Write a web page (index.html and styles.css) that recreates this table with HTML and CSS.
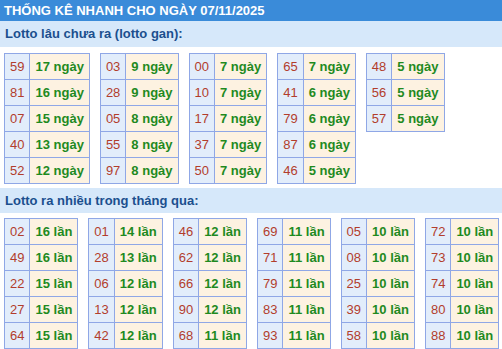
FILE: index.html
```html
<!DOCTYPE html>
<html lang="vi">
<head>
<meta charset="utf-8">
<title>Thống kê nhanh</title>
<link rel="stylesheet" href="styles.css">
</head>
<body>
<div class="title">THỐNG KÊ NHANH CHO NGÀY 07/11/2025</div>
<div class="head head-1">Lotto lâu chưa ra (lotto gan):</div>
<div class="grid grid-1">
  <table class="lt"><tbody>
    <tr><td class="n">59</td><td class="c">17 ngày</td></tr>
    <tr><td class="n">81</td><td class="c">16 ngày</td></tr>
    <tr><td class="n">07</td><td class="c">15 ngày</td></tr>
    <tr><td class="n">40</td><td class="c">13 ngày</td></tr>
    <tr><td class="n">52</td><td class="c">12 ngày</td></tr>
  </tbody></table>
  <table class="lt"><tbody>
    <tr><td class="n">03</td><td class="c">9 ngày</td></tr>
    <tr><td class="n">28</td><td class="c">9 ngày</td></tr>
    <tr><td class="n">05</td><td class="c">8 ngày</td></tr>
    <tr><td class="n">55</td><td class="c">8 ngày</td></tr>
    <tr><td class="n">97</td><td class="c">8 ngày</td></tr>
  </tbody></table>
  <table class="lt"><tbody>
    <tr><td class="n">00</td><td class="c">7 ngày</td></tr>
    <tr><td class="n">10</td><td class="c">7 ngày</td></tr>
    <tr><td class="n">17</td><td class="c">7 ngày</td></tr>
    <tr><td class="n">37</td><td class="c">7 ngày</td></tr>
    <tr><td class="n">50</td><td class="c">7 ngày</td></tr>
  </tbody></table>
  <table class="lt"><tbody>
    <tr><td class="n">65</td><td class="c">7 ngày</td></tr>
    <tr><td class="n">41</td><td class="c">6 ngày</td></tr>
    <tr><td class="n">79</td><td class="c">6 ngày</td></tr>
    <tr><td class="n">87</td><td class="c">6 ngày</td></tr>
    <tr><td class="n">46</td><td class="c">5 ngày</td></tr>
  </tbody></table>
  <table class="lt"><tbody>
    <tr><td class="n">48</td><td class="c">5 ngày</td></tr>
    <tr><td class="n">56</td><td class="c">5 ngày</td></tr>
    <tr><td class="n">57</td><td class="c">5 ngày</td></tr>
  </tbody></table>
</div>
<div class="head head-2">Lotto ra nhiều trong tháng qua:</div>
<div class="grid grid-2">
  <table class="lt"><tbody>
    <tr><td class="n">02</td><td class="c">16 lần</td></tr>
    <tr><td class="n">49</td><td class="c">16 lần</td></tr>
    <tr><td class="n">22</td><td class="c">15 lần</td></tr>
    <tr><td class="n">27</td><td class="c">15 lần</td></tr>
    <tr><td class="n">64</td><td class="c">15 lần</td></tr>
  </tbody></table>
  <table class="lt"><tbody>
    <tr><td class="n">01</td><td class="c">14 lần</td></tr>
    <tr><td class="n">28</td><td class="c">13 lần</td></tr>
    <tr><td class="n">06</td><td class="c">12 lần</td></tr>
    <tr><td class="n">13</td><td class="c">12 lần</td></tr>
    <tr><td class="n">42</td><td class="c">12 lần</td></tr>
  </tbody></table>
  <table class="lt"><tbody>
    <tr><td class="n">46</td><td class="c">12 lần</td></tr>
    <tr><td class="n">62</td><td class="c">12 lần</td></tr>
    <tr><td class="n">66</td><td class="c">12 lần</td></tr>
    <tr><td class="n">90</td><td class="c">12 lần</td></tr>
    <tr><td class="n">68</td><td class="c">11 lần</td></tr>
  </tbody></table>
  <table class="lt"><tbody>
    <tr><td class="n">69</td><td class="c">11 lần</td></tr>
    <tr><td class="n">71</td><td class="c">11 lần</td></tr>
    <tr><td class="n">79</td><td class="c">11 lần</td></tr>
    <tr><td class="n">83</td><td class="c">11 lần</td></tr>
    <tr><td class="n">93</td><td class="c">11 lần</td></tr>
  </tbody></table>
  <table class="lt"><tbody>
    <tr><td class="n">05</td><td class="c">10 lần</td></tr>
    <tr><td class="n">08</td><td class="c">10 lần</td></tr>
    <tr><td class="n">25</td><td class="c">10 lần</td></tr>
    <tr><td class="n">39</td><td class="c">10 lần</td></tr>
    <tr><td class="n">58</td><td class="c">10 lần</td></tr>
  </tbody></table>
  <table class="lt"><tbody>
    <tr><td class="n">72</td><td class="c">10 lần</td></tr>
    <tr><td class="n">73</td><td class="c">10 lần</td></tr>
    <tr><td class="n">74</td><td class="c">10 lần</td></tr>
    <tr><td class="n">80</td><td class="c">10 lần</td></tr>
    <tr><td class="n">88</td><td class="c">10 lần</td></tr>
  </tbody></table>
</div>
</body>
</html>
```

FILE: styles.css
```css
html, body {
  margin: 0;
  padding: 0;
  background: #ffffff;
}
body {
  font-family: "Liberation Sans", Arial, sans-serif;
  font-size: 13px;
  overflow: hidden;
}
.title {
  height: 21px;
  line-height: 21px;
  background: #3a8bd9;
  color: #ffffff;
  font-weight: bold;
  font-size: 13px;
  padding-left: 4px;
  white-space: nowrap;
}
.head {
  background: #d6e8fa;
  color: #1b4f8e;
  font-weight: bold;
  font-size: 13px;
  padding-left: 5px;
  white-space: nowrap;
}
.head-1 {
  height: 26px;
  line-height: 26px;
}
.head-2 {
  height: 25px;
  line-height: 25px;
}
.grid {
  display: flex;
  align-items: flex-start;
  padding-left: 4px;
}
.grid-1 {
  gap: 10px;
  padding-top: 6px;
  padding-bottom: 4px;
}
.grid-2 {
  gap: 10px;
  padding-top: 5px;
}
.lt {
  border-collapse: collapse;
  border: 1px solid #8fa7e6;
}
.lt td {
  border: 1px solid #8fa7e6;
  height: 25px;
  line-height: 25px;
  padding: 0 5px;
  text-align: center;
  white-space: nowrap;
  box-sizing: border-box;
}
.lt td.n {
  background: #e2edfb;
  color: #b23d2c;
}
.lt td.c {
  background: #fdf2e1;
  color: #1f8a1f;
  font-weight: bold;
}
```
